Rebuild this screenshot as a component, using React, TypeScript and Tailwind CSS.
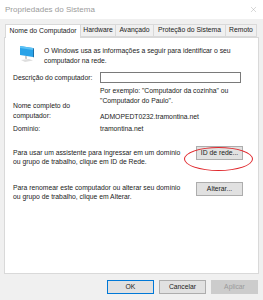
import { X } from "lucide-react"

const font = "font-['Segoe_UI','Liberation_Sans',Arial,sans-serif]"

const MonitorIcon = () => (
  <svg width="18" height="18" viewBox="0 0 18 18">
    {/* screen */}
    <path d="M2 1 L15 3 L15 12 L2 10 Z" fill="#2aa3e8" />
    <path d="M2 1 L15 3 L15 5 L2 3 Z" fill="#5cc2f5" />
    <path d="M15 3 L16 3.5 L16 12.5 L15 12 Z" fill="#1b6fa8" />
    {/* stand */}
    <path d="M7 11 L9 11.3 L9 14 L7 13.8 Z" fill="#c9c9c9" />
    <path d="M3 15 L11 14 L15 15.5 L7 17 Z" fill="#dedede" />
  </svg>
)

const WinButton = ({ label, primary, disabled }: { label: string; primary?: boolean; disabled?: boolean }) => (
  <div
    className={`flex h-[14px] w-[47px] items-center justify-center border text-[6.8px] ${
      primary
        ? "border-[#0078d7] bg-[#e1e1e1] text-[#222]"
        : disabled
        ? "border-[#cccccc] bg-[#cccccc] text-[#9a9a9a]"
        : "border-[#adadad] bg-[#e1e1e1] text-[#222]"
    }`}
  >
    {label}
  </div>
)

const tabs = [
  { label: "Nome do Computador", w: "w-[76px]" },
  { label: "Hardware", w: "w-[35px]" },
  { label: "Avançado", w: "w-[38px]" },
  { label: "Proteção do Sistema", w: "w-[72px]" },
  { label: "Remoto", w: "w-[31px]" },
]

export default function App() {
  return (
    <div className={`${font} flex h-[300px] w-[263px] flex-col bg-[#f0f0f0] text-[#222]`}>
      {/* title bar */}
      <div className="flex h-[19px] items-center justify-between bg-white pl-[5px] pr-[5px]">
        <span className="text-[8px] text-[#9b9b9b]">Propriedades do Sistema</span>
        <X size={9} strokeWidth={1} className="text-[#999]" />
      </div>

      <div className="flex flex-col px-[4px] pt-[5px]">
        {/* tabs */}
        <div className="flex h-[13px] items-end pl-[1px]">
          {tabs.map((t, i) => (
            <div
              key={t.label}
              className={
                i === 0
                  ? `relative z-10 -mb-[1px] flex h-[14px] shrink-0 items-center justify-center whitespace-nowrap border border-b-0 border-[#d9d9d9] bg-white text-[6.8px] ${t.w}`
                  : `flex h-[13px] shrink-0 items-center justify-center whitespace-nowrap border border-l-0 border-[#d9d9d9] bg-[#f0f0f0] text-[6.8px] ${t.w}`
              }
            >
              {t.label}
            </div>
          ))}
        </div>

        {/* panel */}
        <div className="relative flex h-[237px] flex-col border border-[#d9d9d9] bg-white pl-[8px] pr-[15px] text-[6.8px] leading-[9.5px]">
          <div className="mt-[7px] flex items-start">
            <div className="ml-[5px] w-[26px]">
              <MonitorIcon />
            </div>
            <div className="pt-[1px]">
              O Windows usa as informações a seguir para identificar o seu
              <br />
              computador na rede.
            </div>
          </div>

          <div className="mt-[7px] flex items-center">
            <div className="w-[87px]">Descrição do computador:</div>
            <div className="h-[11px] w-[141px] border border-[#7a7a7a] bg-white" />
          </div>

          <div className="mt-[3px] pl-[87px]">
            Por exemplo: "Computador da cozinha" ou
            <br />
            "Computador do Paulo".
          </div>

          <div className="-mt-[4px] flex items-end">
            <div className="w-[87px]">
              Nome completo do
              <br />
              computador:
            </div>
            <div className="-mb-[1px]">ADMOPEDT0232.tramontina.net</div>
          </div>

          <div className="mt-[4px] flex">
            <div className="w-[87px]">Domínio:</div>
            <div>tramontina.net</div>
          </div>

          <div className="mt-[12px] flex items-start justify-between">
            <div className="pt-[2px]">
              Para usar um assistente para ingressar em um domínio
              <br />
              ou grupo de trabalho, clique em ID de Rede.
            </div>
            <WinButton label="ID de rede..." />
          </div>

          <div className="mt-[15px] flex items-start justify-between">
            <div className="pt-[1px]">
              Para renomear este computador ou alterar seu domínio
              <br />
              ou grupo de trabalho, clique em Alterar.
            </div>
            <WinButton label="Alterar..." />
          </div>

          {/* red highlight */}
          <div className="pointer-events-none absolute left-[179px] top-[109px] h-[24px] w-[69px] rounded-[50%] border-[1.5px] border-[#e0262b]" />
        </div>

        {/* footer */}
        <div className="mt-[6px] flex justify-end gap-[5px] pr-[1px]">
          <WinButton label="OK" primary />
          <WinButton label="Cancelar" />
          <WinButton label="Aplicar" disabled />
        </div>
      </div>
    </div>
  )
}
